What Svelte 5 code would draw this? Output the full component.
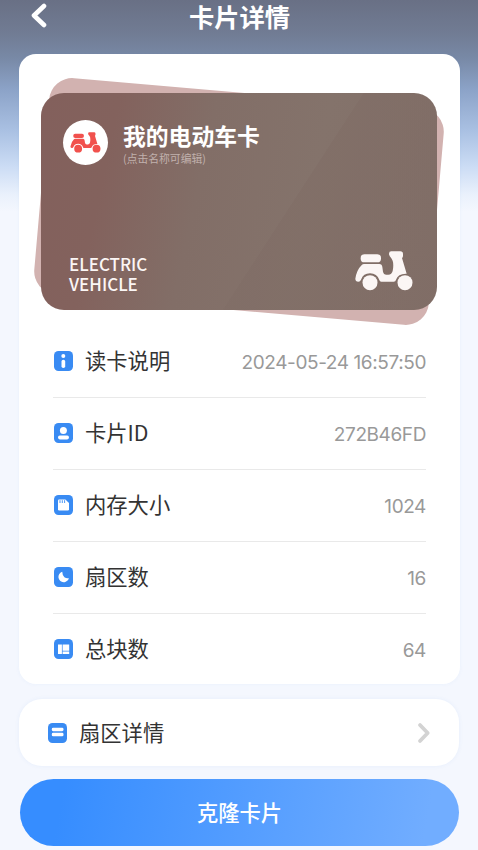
<script lang="ts">
  interface Row {
    icon: string;
    label: string;
    value: string;
  }

  let rows: Row[] = $state([
    { icon: "info", label: "读卡说明", value: "2024-05-24 16:57:50" },
    { icon: "user", label: "卡片ID", value: "272B46FD" },
    { icon: "memory", label: "内存大小", value: "1024" },
    { icon: "sector", label: "扇区数", value: "16" },
    { icon: "block", label: "总块数", value: "64" },
  ]);
</script>

{#snippet scooter()}
  <svg class="scooter" viewBox="16 17 174 120" fill="currentColor">
    <rect x="33" y="27" width="61" height="24" rx="11" />
    <path d="M125 18H152Q160 18 160 26V31Q160 36 157 38L171 85Q145 84 139 103Q138 109 132 109H95Q90 109 89 104Q82 84 61 84Q41 84 34 103Q32 109 26 109Q17 109 17 100Q21 73 37 58Q39 56 43 56H89Q97 56 98 65L100 79Q102 88 110 88H116Q126 88 129 77Q132 64 130 50Q129 45 125 39Q118 32 118 25Q118 18 125 18Z" />
    <circle cx="61" cy="112" r="22.5" />
    <circle cx="166" cy="112" r="22.5" />
  </svg>
{/snippet}

{#snippet badge(name: string)}
  <svg class="badge" viewBox="0 0 19 20">
    <rect width="19" height="20" rx="4.5" fill="#398bf3" />
    <g fill="#fff">
      {#if name === "info"}
        <circle cx="9.3" cy="5.1" r="2" />
        <rect x="7.5" y="8.7" width="3.7" height="8.3" rx="1.8" />
      {:else if name === "user"}
        <circle cx="9.4" cy="7.4" r="3.5" />
        <rect x="4" y="12.6" width="11" height="3.8" rx="1.8" />
      {:else if name === "memory"}
        <path d="M5 4.5H11.4L15 8V14.2Q15 15.5 13.7 15.5H5.3Q4 15.5 4 14.2V5.5Q4 4.5 5 4.5Z" />
        <path d="M6 5.2V8M8.3 5.2V8M10.6 5.2V8" stroke="#398bf3" stroke-width="0.9" />
      {:else if name === "sector"}
        <path d="M8.3 4.8A5.3 5.3 0 1 0 14.9 11.2Q12.5 11.8 10.4 10.2Q8.2 8.2 8.3 4.8Z" />
      {:else if name === "block"}
        <path d="M4 5.5H7.9V15H4ZM8.6 5.5H15.2V11.7H8.6ZM8.6 12.4H15.2V15H8.6Z" />
      {:else}
        <rect x="3.8" y="4.7" width="11.7" height="3.5" rx="1.4" />
        <rect x="3.8" y="9.8" width="11.7" height="3.5" rx="1.4" />
      {/if}
    </g>
  </svg>
{/snippet}

<div class="page">
  <header>
    <button class="back" aria-label="返回">
      <svg viewBox="0 0 16 26">
        <path d="M13 3L3 12.5L13 22" fill="none" stroke="#fff" stroke-width="4.6" stroke-linecap="round" stroke-linejoin="round" />
      </svg>
    </button>
    <h1>卡片详情</h1>
  </header>

  <section class="panel">
    <div class="card-wrap">
      <div class="card">
        <div class="card-head">
          <span class="avatar">{@render scooter()}</span>
          <div>
            <div class="name">我的电动车卡</div>
            <div class="hint">(点击名称可编辑)</div>
          </div>
        </div>
        <div class="card-foot">
          <span class="kind">ELECTRIC<br />VEHICLE</span>
          {@render scooter()}
        </div>
      </div>
    </div>

    <div class="rows">
      {#each rows as row (row.label)}
        <div class="row">
          {@render badge(row.icon)}
          <span class="label">{row.label}</span>
          <span class="value">{row.value}</span>
        </div>
      {/each}
    </div>
  </section>

  <button class="detail">
    {@render badge("list")}
    <span class="label">扇区详情</span>
    <svg class="arrow" viewBox="0 0 14 22">
      <path d="M3 3L10.7 11L3 19" fill="none" stroke="#d3d3d3" stroke-width="3.8" stroke-linecap="round" stroke-linejoin="round" />
    </svg>
  </button>

  <button class="clone">克隆卡片</button>
</div>

<style>
  :global(body) {
    margin: 0;
  }

  .page {
    height: 850px;
    box-sizing: border-box;
    padding: 0 18px 0 19px;
    overflow: hidden;
    font-family: "Noto Sans CJK SC", sans-serif;
    background: linear-gradient(#697085 0, #717c94 34px, #7889a6 58px, #8ca3c8 90px, #a9c0e2 130px, #cadbf4 165px, #eaf1fc 195px, #f4f7fe 212px);
  }

  button {
    border: none;
    background: none;
    padding: 0;
    font: inherit;
    cursor: pointer;
  }

  header {
    display: grid;
    grid-template-columns: 40px 1fr 40px;
    align-items: start;
    height: 54px;
  }

  .back {
    padding: 3px 0 0 12px;
    text-align: left;
    line-height: 0;
  }

  .back svg {
    width: 16px;
    height: 26px;
  }

  h1 {
    margin: 0;
    color: #fff;
    font-size: 25.3px;
    font-weight: 700;
    line-height: 32px;
    text-align: center;
  }

  .panel {
    height: 630px;
    box-sizing: border-box;
    padding: 39px 23px 0 22px;
    border-radius: 17px;
    background: #fff;
    box-shadow: 0 0 4px rgba(60, 130, 220, 0.06);
  }

  .card-wrap {
    position: relative;
    height: 217px;
  }

  .card-wrap::before {
    content: "";
    position: absolute;
    inset: 0;
    border-radius: 23px;
    background: #d2b2b0;
    transform: rotate(5deg);
  }

  .card {
    position: relative;
    height: 100%;
    box-sizing: border-box;
    padding: 27px 24px 16px 22px;
    display: flex;
    flex-direction: column;
    justify-content: space-between;
    border-radius: 23px;
    color: #fff;
    background:
      linear-gradient(123deg, transparent 60%, rgba(128, 109, 102, 0.6) 60.2%),
      linear-gradient(102deg, #83605c 0%, #83625d 18%, #826e67 40%, #84736b 66%, #816e67 100%);
  }

  .card-head {
    display: flex;
    gap: 15px;
  }

  .avatar {
    width: 45px;
    height: 45px;
    display: flex;
    align-items: center;
    justify-content: center;
    border-radius: 50%;
    background: #fff;
    color: #f1514d;
  }

  .avatar .scooter {
    width: 31px;
    height: 21px;
  }

  .name {
    font-size: 22.8px;
    font-weight: 700;
    line-height: 32px;
  }

  .hint {
    font-size: 10.8px;
    line-height: 12px;
    color: #c1b1ad;
  }

  .card-foot {
    display: flex;
    justify-content: space-between;
    align-items: flex-end;
    padding-left: 6px;
    color: #fbf6f5;
  }

  .card-foot .scooter {
    width: 58px;
    height: 40px;
    margin-bottom: 3px;
  }

  .kind {
    font-size: 17px;
    font-weight: 500;
    line-height: 20px;
  }

  .rows {
    padding: 16px 11px 0 12px;
  }

  .row {
    display: flex;
    align-items: center;
    height: 72px;
    box-sizing: border-box;
    padding-bottom: 2px;
    border-bottom: 1px solid #e9e9e9;
  }

  .row:last-child {
    border-bottom-color: transparent;
  }

  .badge {
    width: 19px;
    height: 20px;
    margin-left: 1px;
  }

  .label {
    margin: -1px 0 0 12px;
    font-size: 21.3px;
    line-height: 32px;
    color: #333;
  }

  .value {
    margin-left: auto;
    padding-top: 5px;
    font-family: Inter, sans-serif;
    font-size: 19px;
    line-height: 30px;
    letter-spacing: -0.4px;
    color: #999;
  }

  .detail {
    display: flex;
    align-items: center;
    width: 440px;
    height: 67px;
    margin-top: 15px;
    padding: 0 28px;
    border-radius: 23px;
    background: #fff;
    box-shadow: 0 0 4px rgba(60, 130, 220, 0.08);
  }

  .arrow {
    width: 14px;
    height: 22px;
    margin-left: auto;
  }

  .clone {
    width: 439px;
    height: 67px;
    margin: 13px 0 0 1px;
    padding-bottom: 2px;
    border-radius: 34px;
    color: #fff;
    font-size: 21.3px;
    font-weight: 500;
    background: linear-gradient(100deg, #368dff 10%, #71adff 92%);
  }
</style>
